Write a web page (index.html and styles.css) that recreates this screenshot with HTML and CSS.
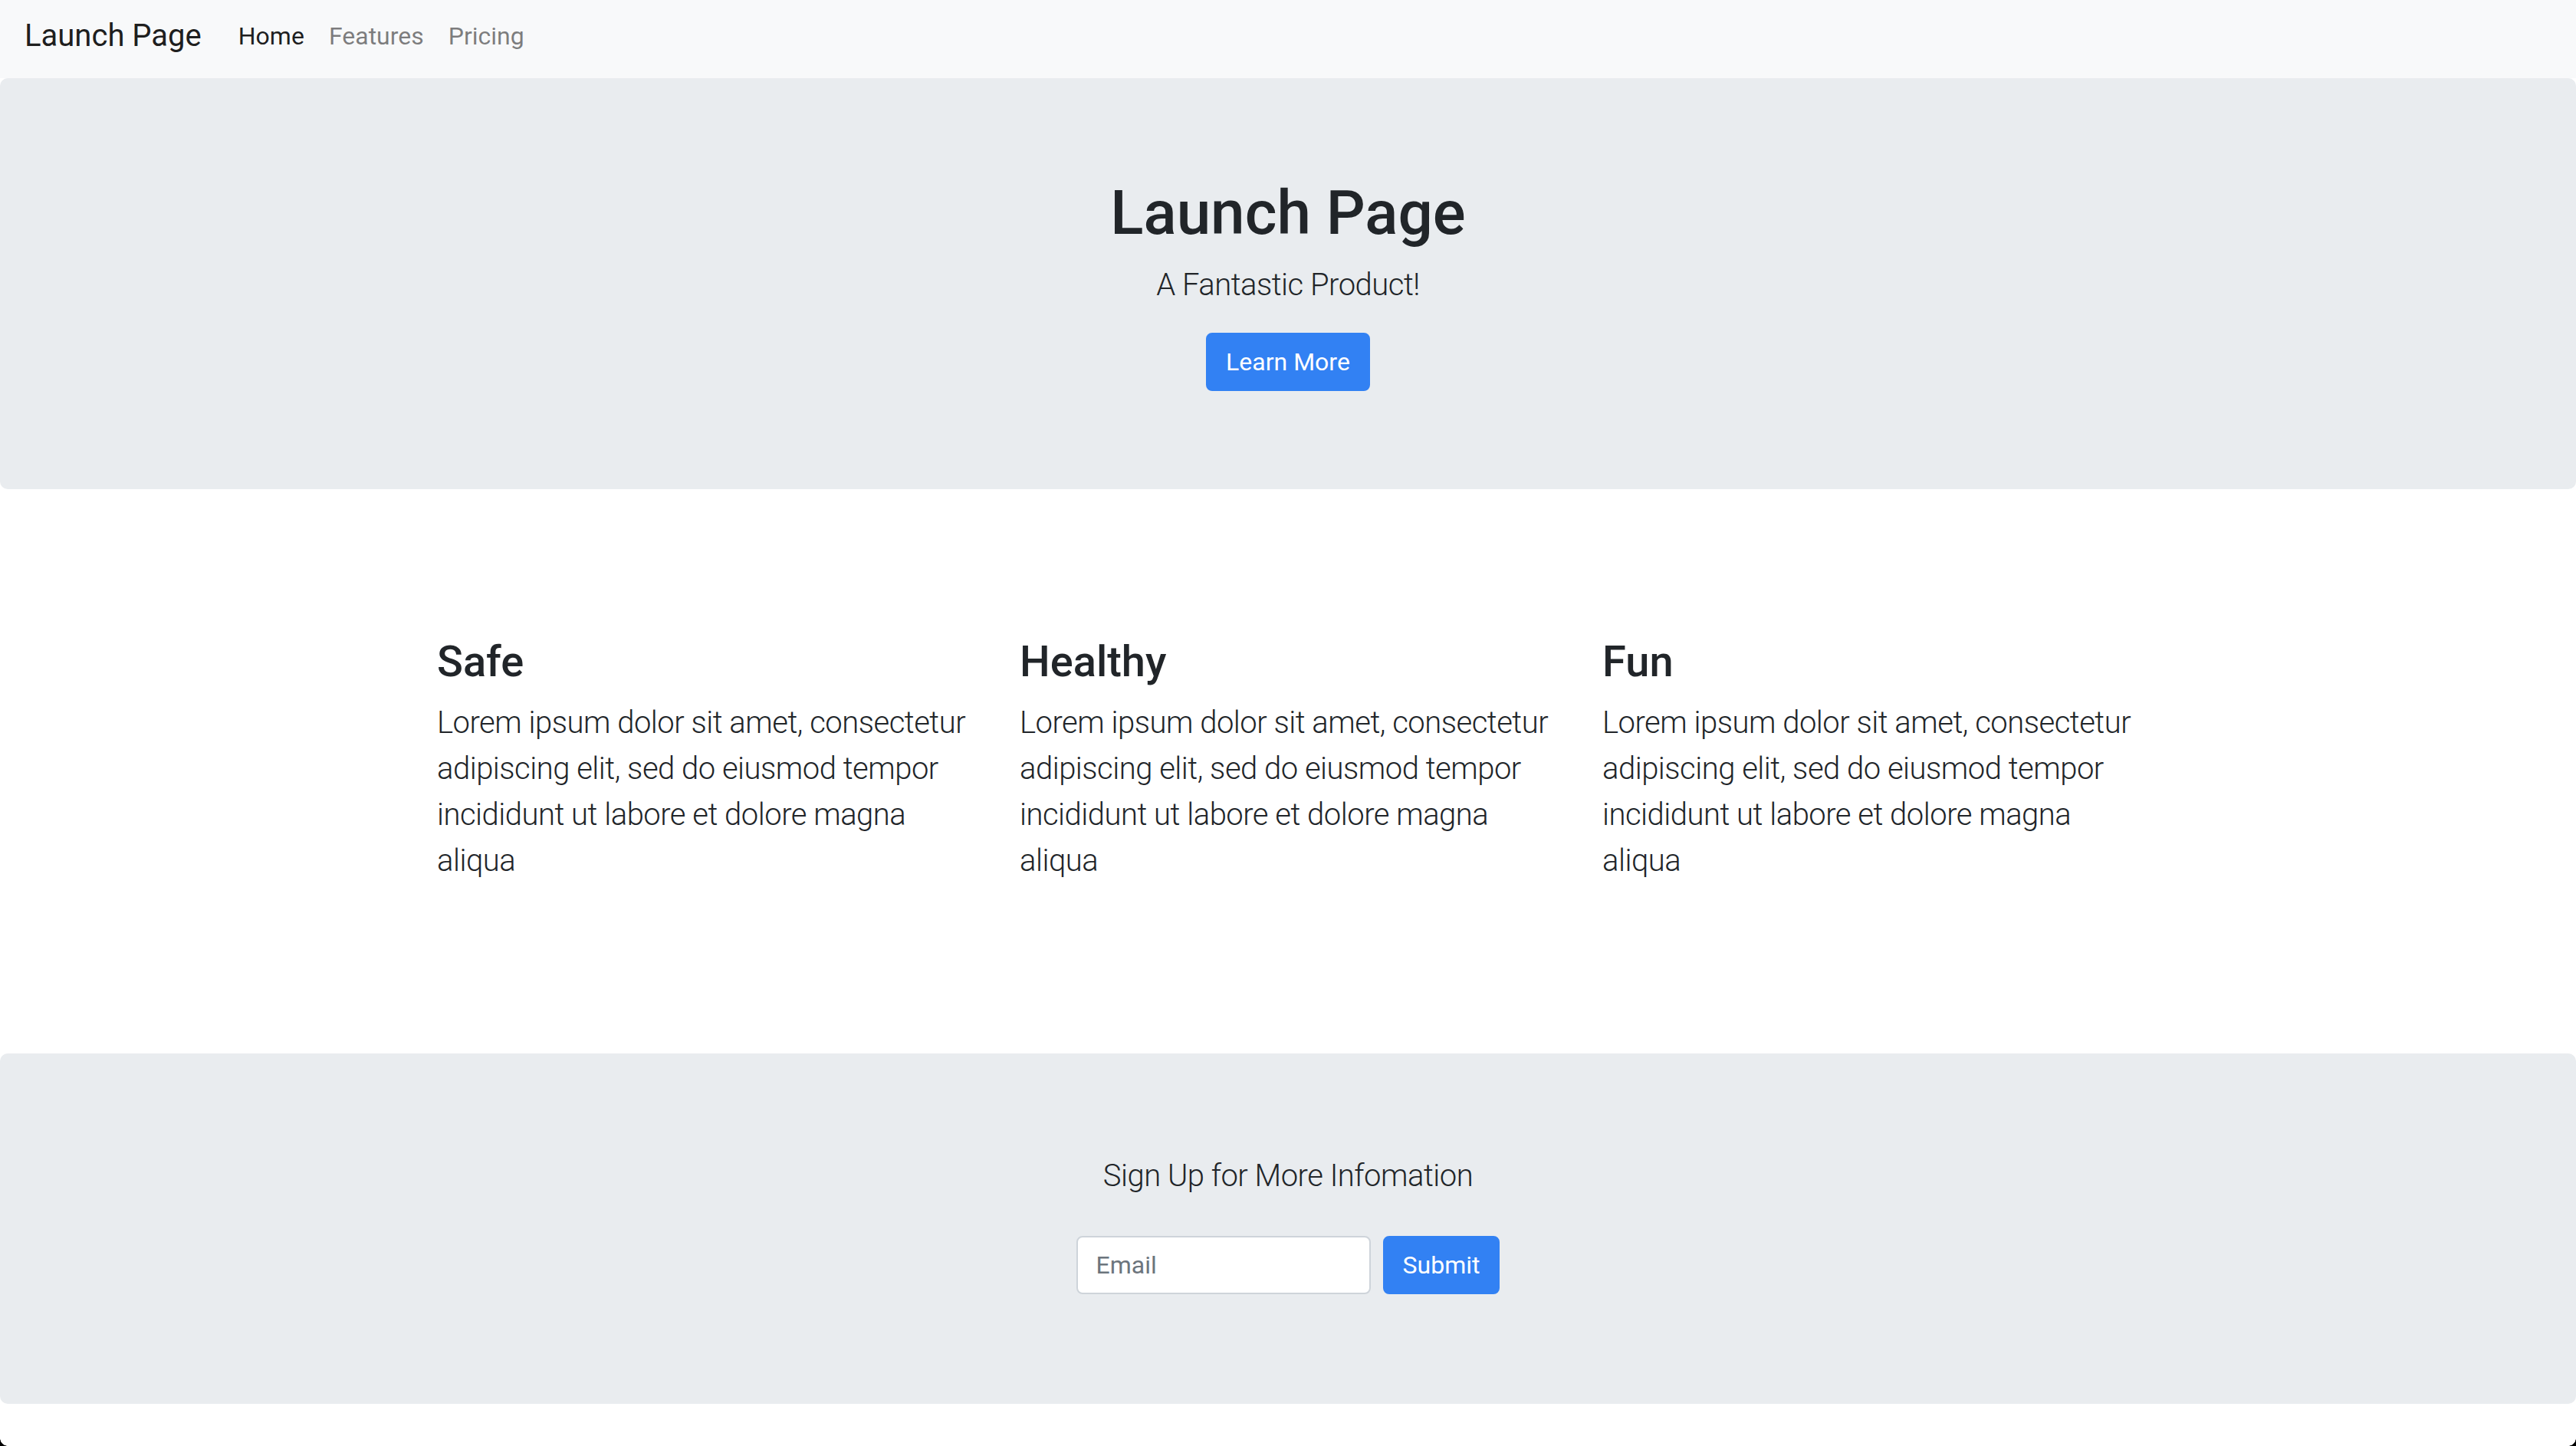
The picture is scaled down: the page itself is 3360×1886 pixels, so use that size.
FILE: index.html
```html
<!DOCTYPE html>
<html lang="en">
<head>
<meta charset="utf-8">
<title>Launch Page</title>
<link rel="stylesheet" href="styles.css">
</head>
<body>
<nav class="navbar">
  <a class="brand" href="#">Launch Page</a>
  <ul class="nav">
    <li><a class="nav-link active" href="#">Home</a></li>
    <li><a class="nav-link" href="#">Features</a></li>
    <li><a class="nav-link" href="#">Pricing</a></li>
  </ul>
</nav>

<header class="hero">
  <h1 class="hero-title">Launch Page</h1>
  <p class="lead hero-lead">A Fantastic Product!</p>
  <a class="btn" href="#">Learn More</a>
</header>

<section class="features">
  <div class="container">
    <div class="feature">
      <h3 class="feature-title">Safe</h3>
      <p class="lead">Lorem ipsum dolor sit amet, consectetur adipiscing elit, sed do eiusmod tempor incididunt ut labore et dolore magna aliqua</p>
    </div>
    <div class="feature">
      <h3 class="feature-title">Healthy</h3>
      <p class="lead">Lorem ipsum dolor sit amet, consectetur adipiscing elit, sed do eiusmod tempor incididunt ut labore et dolore magna aliqua</p>
    </div>
    <div class="feature">
      <h3 class="feature-title">Fun</h3>
      <p class="lead">Lorem ipsum dolor sit amet, consectetur adipiscing elit, sed do eiusmod tempor incididunt ut labore et dolore magna aliqua</p>
    </div>
  </div>
</section>

<footer class="signup">
  <p class="lead signup-lead">Sign Up for More Infomation</p>
  <form class="signup-form" onsubmit="return false">
    <input class="input" type="email" placeholder="Email">
    <button class="btn" type="submit">Submit</button>
  </form>
</footer>

<div class="corner corner-left"></div>
<div class="corner corner-right"></div>
</body>
</html>
```

FILE: styles.css
```css
* { box-sizing: border-box; }

html, body {
  margin: 0;
  padding: 0;
  background: #fff;
}

body {
  font-family: "Roboto", "Liberation Sans", sans-serif;
  color: #212529;
  font-size: 32px;
  line-height: 1.5;
}

a { text-decoration: none; }

/* Navbar */
.navbar {
  display: flex;
  align-items: center;
  height: 102px;
  padding: 0 32px;
  background: #f8f9fa;
}

.brand {
  font-size: 40px;
  line-height: 1.5;
  color: rgba(0, 0, 0, 0.9);
  margin-right: 32px;
  padding-bottom: 8px;
}

.nav {
  display: flex;
  list-style: none;
  margin: 0;
  padding: 0;
}

.nav-link {
  display: block;
  padding: 0 16px 8px;
  font-size: 32px;
  color: rgba(0, 0, 0, 0.5);
}

.nav-link.active { color: rgba(0, 0, 0, 0.9); }

/* Hero */
.hero {
  background: #e9ecef;
  border-radius: 10px;
  padding: 128px 64px;
  margin-bottom: 64px;
  text-align: center;
}

.hero-title {
  font-size: 80px;
  font-weight: 500;
  line-height: 1.2;
  margin: 0 0 16px;
}

.lead {
  font-size: 40px;
  font-weight: 300;
  line-height: 1.5;
  letter-spacing: -0.5px;
  margin: 0;
}

.hero-lead { margin-bottom: 32px; }

.btn {
  display: inline-block;
  font-family: inherit;
  font-size: 32px;
  font-weight: 400;
  line-height: 1.5;
  padding: 12px 24px;
  border: 2px solid #3281f3;
  border-radius: 8px;
  background: #3281f3;
  color: #fff;
  cursor: pointer;
}

/* Features */
.features {
  padding: 128px 0 221px;
}

.container {
  width: 2280px;
  margin: 0 auto;
  display: grid;
  grid-template-columns: repeat(3, 1fr);
}

.feature {
  padding: 0 30px;
}

.feature-title {
  font-size: 56px;
  font-weight: 500;
  line-height: 1.2;
  margin: 0 0 16px;
}

/* Sign up */
.signup {
  background: #e9ecef;
  border-radius: 10px;
  padding: 130px 0 143px;
  text-align: center;
}

.signup-lead { margin-bottom: 48px; }

.signup-form {
  display: flex;
  justify-content: center;
  gap: 16px;
  margin: 0;
}

.input {
  width: 384px;
  height: 76px;
  padding: 0 24px;
  font-family: inherit;
  font-size: 32px;
  color: #495057;
  background: #fff;
  border: 2px solid #ced4da;
  border-radius: 8px;
}

.input::placeholder { color: #6c757d; }

/* Window corners of the screenshot */
.corner {
  position: fixed;
  bottom: 0;
  width: 10px;
  height: 10px;
}

.corner-left {
  left: 0;
  background: radial-gradient(circle at 10px 0, transparent 9.5px, #000 10px);
}

.corner-right {
  right: 0;
  background: radial-gradient(circle at 0 0, transparent 9.5px, #000 10px);
}
```
